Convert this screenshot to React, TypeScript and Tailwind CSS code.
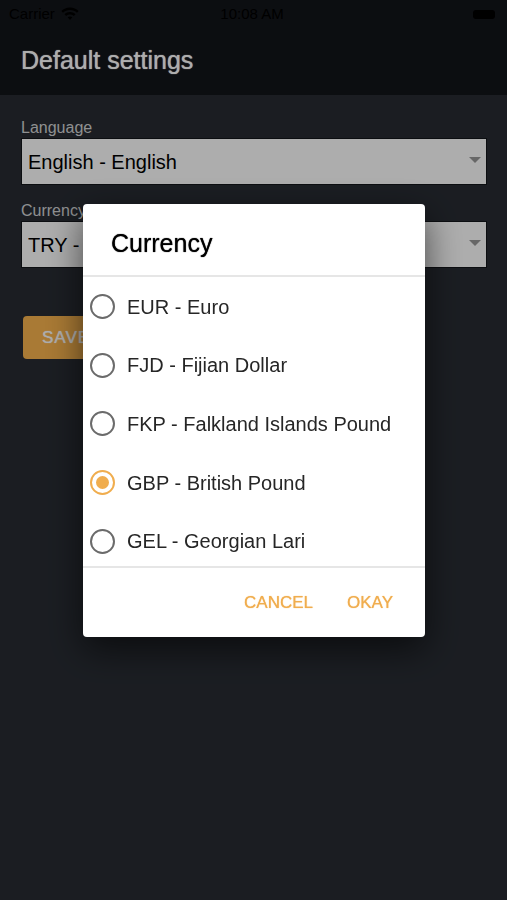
import { useState } from "react";

const currencies = [
  { code: "EUR", name: "Euro" },
  { code: "FJD", name: "Fijian Dollar" },
  { code: "FKP", name: "Falkland Islands Pound" },
  { code: "GBP", name: "British Pound" },
  { code: "GEL", name: "Georgian Lari" },
];

function StatusBar() {
  return (
    <div className="grid h-7 grid-cols-3 items-center pr-3 pl-[9px] text-[15px] leading-5 text-black">
      <div className="flex items-center gap-1.5">
        <span>Carrier</span>
        <svg width="18" height="14" viewBox="0 0 18 14" fill="currentColor" aria-hidden="true">
          <path d="M9 0.5C5.7 0.5 2.6 1.8 0.4 4l1.6 1.7C3.9 3.9 6.3 2.9 9 2.9s5.1 1 7 2.800L17.600 4C15.400 1.800 12.300 0.500 9 0.500Z" />
          <path d="M9 5C6.900 5 5 5.800 3.500 7.200l1.700 1.700C6.200 7.900 7.500 7.400 9 7.400s2.800 0.500 3.800 1.500l1.700-1.700C13 5.800 11.100 5 9 5Z" />
          <path d="M9 9.400c-0.900 0-1.700 0.300-2.300 0.900L9 13l2.300-2.700C10.700 9.700 9.900 9.400 9 9.400Z" />
        </svg>
      </div>
      <span className="text-center whitespace-nowrap">10:08 AM</span>
      <div className="h-[9px] w-[22px] justify-self-end rounded-[3px] bg-black" />
    </div>
  );
}

function SelectField({ id, label, value }: { id: string; label: string; value: string }) {
  return (
    <div className="flex flex-col">
      <label htmlFor={id} className="text-base leading-5 text-[#d3d4d6]">
        {label}
      </label>
      <div className="relative">
        <select
          id={id}
          className="block h-[47px] w-full appearance-none border border-[#13151a] bg-white pr-8 pl-1.5 text-xl text-black"
        >
          <option>{value}</option>
        </select>
        <svg
          className="pointer-events-none absolute top-[19px] right-[6px] text-[#999999]"
          width="12"
          height="6"
          viewBox="0 0 12 6"
          fill="currentColor"
          aria-hidden="true"
        >
          <path d="M0 0h12L6 6Z" />
        </svg>
      </div>
    </div>
  );
}

function DialogButton({ label }: { label: string }) {
  return (
    <button type="button" className="[text-shadow:0_0_1px_currentColor]">
      {label}
    </button>
  );
}

function CurrencyDialog() {
  const [selected, setSelected] = useState("GBP");
  return (
    <div
      role="dialog"
      aria-modal="true"
      aria-labelledby="currency-title"
      className="flex w-full max-w-[342px] flex-col overflow-hidden rounded bg-white shadow-[0_12px_36px_rgba(0,0,0,0.6)]"
    >
      <h2
        id="currency-title"
        className="px-7 pt-6 pb-[17px] text-[25px] leading-[30px] font-normal text-black [text-shadow:0_0_1px_currentColor]"
      >
        Currency
      </h2>
      <div className="h-[293px] overflow-hidden border-y-2 border-[#e6e6e6] pt-px">
        <div role="radiogroup" aria-labelledby="currency-title" className="grid h-[293px] grid-rows-5">
          {currencies.map(({ code, name }) => (
            <label key={code} className="flex items-center gap-3 pl-[7px] text-xl text-[#262626]">
              <input
                type="radio"
                name="currency"
                value={code}
                checked={selected === code}
                onChange={() => setSelected(code)}
                className="grid size-[25px] shrink-0 appearance-none place-items-center rounded-full border-2 border-[#6b6b6b] before:size-[13px] before:rounded-full checked:border-[#f0ad4e] checked:before:bg-[#f0ad4e]"
              />
              <span>
                {code} - {name}
              </span>
            </label>
          ))}
        </div>
      </div>
      <div className="flex items-center justify-end gap-[34px] pt-6 pr-8 pb-[23px] text-[17px] leading-[22px] text-[#f0ad4e]">
        <DialogButton label="CANCEL" />
        <DialogButton label="OKAY" />
      </div>
    </div>
  );
}

export default function App() {
  return (
    <div className="min-h-screen bg-[#282c33] font-['Liberation_Sans',Arial,sans-serif]">
      <header className="h-[95px] bg-[#13151a]">
        <StatusBar />
        <h1 className="px-[21px] pt-[17px] text-[25px] leading-[30px] text-white [text-shadow:0_0_1px_currentColor]">
          Default settings
        </h1>
      </header>
      <main className="pt-[23px] pr-5 pl-[21px]">
        <form className="flex flex-col items-stretch gap-4" onSubmit={(e) => e.preventDefault()}>
          <SelectField id="language" label="Language" value="English - English" />
          <SelectField id="currency" label="Currency" value="TRY - Turkish Lira" />
          <button
            type="submit"
            className="mt-8 ml-0.5 h-[43px] self-start rounded bg-[#f9b44e] px-[19px] text-[17px] tracking-[1px] text-white [text-shadow:0_0_1px_currentColor]"
          >
            SAVE
          </button>
        </form>
      </main>
      <div className="fixed inset-0 flex items-center justify-center bg-black/32 pr-5 pb-[60px] pl-[21px]">
        <CurrencyDialog />
      </div>
    </div>
  );
}
